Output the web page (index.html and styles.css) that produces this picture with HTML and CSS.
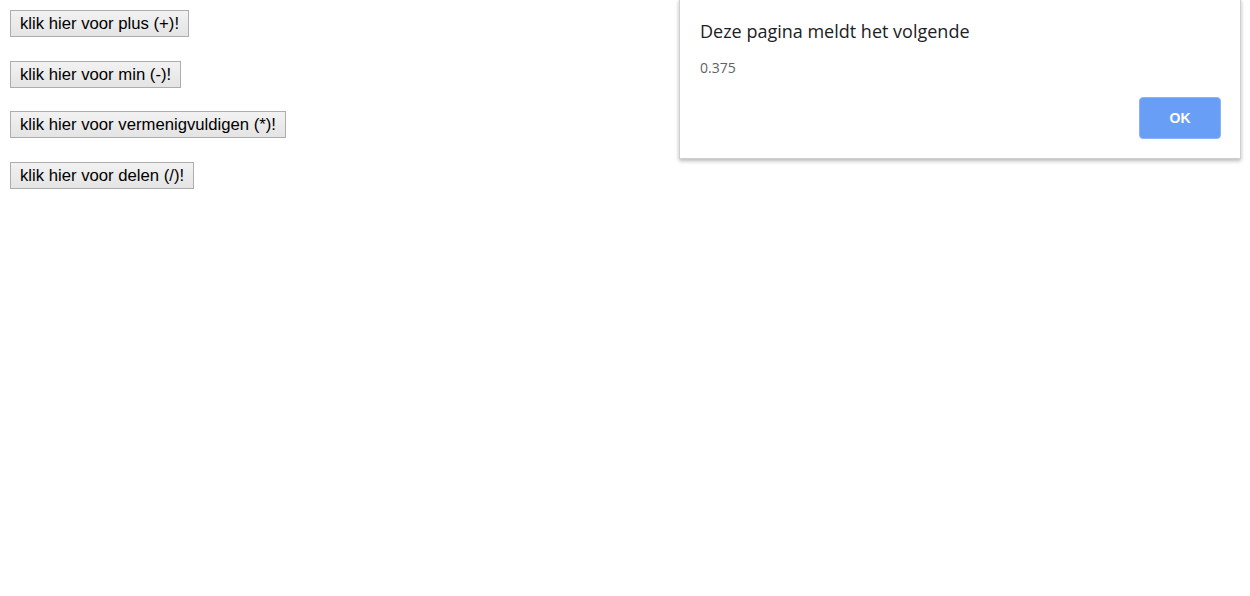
FILE: index.html
```html
<!DOCTYPE html>
<html>
<head>
<meta charset="utf-8">
<link rel="stylesheet" href="styles.css">
</head>
<body>
<div class="buttons">
  <div class="row"><button class="btn">klik hier voor plus (+)!</button></div>
  <div class="row"><button class="btn">klik hier voor min (-)!</button></div>
  <div class="row"><button class="btn">klik hier voor vermenigvuldigen (*)!</button></div>
  <div class="row"><button class="btn">klik hier voor delen (/)!</button></div>
</div>
<div class="dialog">
  <div class="title">Deze pagina meldt het volgende</div>
  <div class="message">0.375</div>
  <div class="actions"><button class="ok">OK</button></div>
</div>
</body>
</html>
```
FILE: styles.css
```css
html, body {
  margin: 0;
  padding: 0;
  background: #ffffff;
}
.buttons {
  padding: 10px;
  display: flex;
  flex-direction: column;
  gap: 23.67px;
}
.row {
  display: flex;
}
.btn {
  font-family: "Liberation Sans", Arial, sans-serif;
  font-size: 16.7px;
  color: #000;
  height: 27px;
  padding: 0 9px;
  border: 1px solid #adadad;
  border-radius: 0;
  background: linear-gradient(#f2f2f2, #e4e4e4);
  line-height: 25px;
}
.dialog {
  position: absolute;
  left: 679px;
  top: -1px;
  width: 562px;
  height: 160px;
  background: #fff;
  border: 1px solid #cfcfcf;
  box-shadow: 0 2px 4px rgba(0,0,0,0.28);
  box-sizing: border-box;
  padding: 20px 19px 19px 20px;
  display: flex;
  flex-direction: column;
  font-family: "Open Sans", "Noto Sans", sans-serif;
}
.title {
  font-size: 18px;
  line-height: 24px;
  color: #202124;
  margin-top: -1px;
}
.message {
  font-size: 14px;
  line-height: 20px;
  color: #5f6368;
  margin-top: 15px;
}
.actions {
  margin-top: auto;
  display: flex;
  justify-content: flex-end;
}
.ok {
  width: 82px;
  height: 42px;
  border: 1px solid #8ab4f8;
  border-radius: 4px;
  background: #699ef7;
  color: #ffffff;
  font-family: "Liberation Sans", Arial, sans-serif;
  font-weight: bold;
  font-size: 14px;
}
```
